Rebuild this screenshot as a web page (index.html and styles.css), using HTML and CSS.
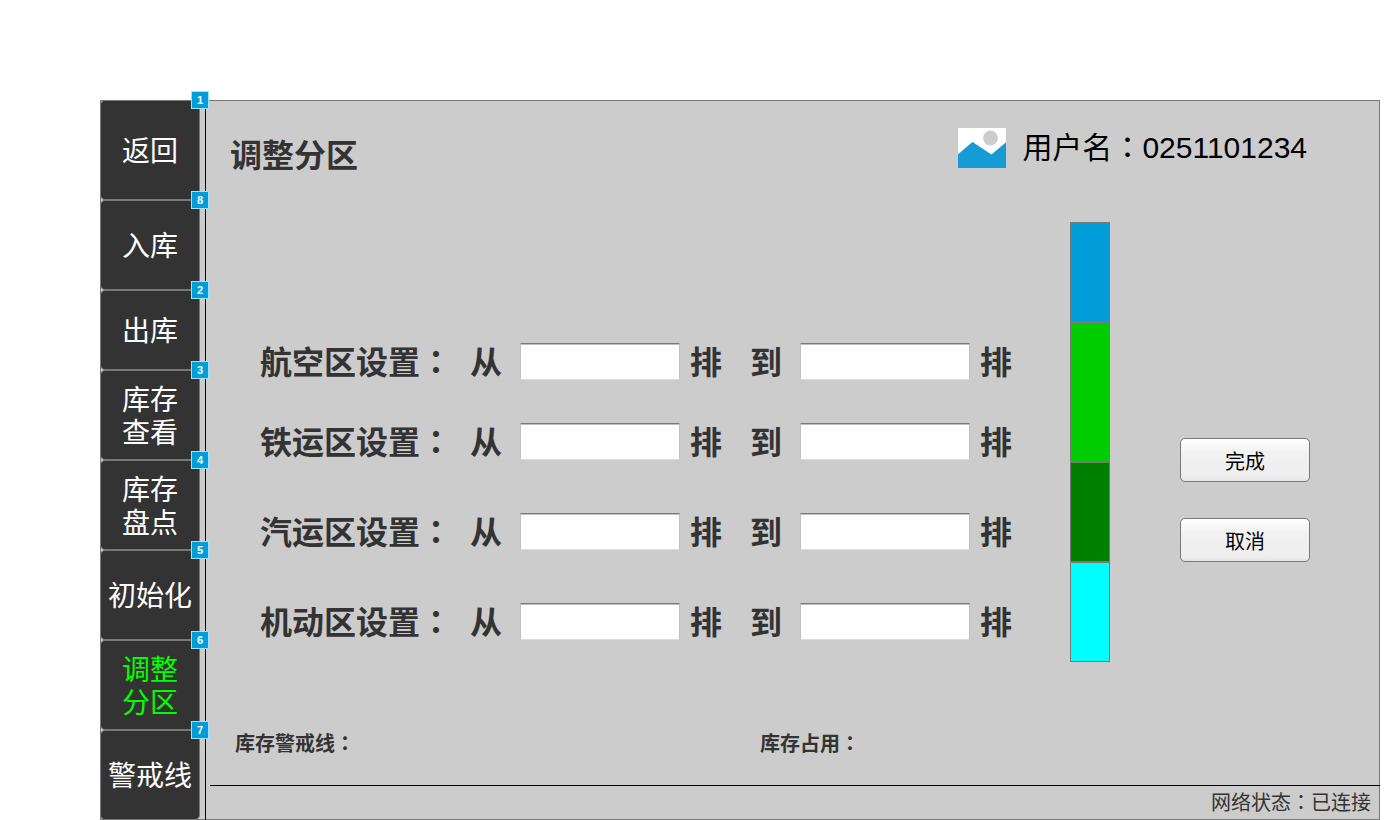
FILE: index.html
```html
<!DOCTYPE html>
<html lang="zh-CN">
<head>
<meta charset="utf-8">
<title>调整分区</title>
<link rel="stylesheet" href="styles.css">
</head>
<body>
<div class="frame">
  <nav class="sidebar">
    <button class="nav-item nav-tall" type="button">返回<span class="badge">1</span></button>
    <button class="nav-item" type="button">入库<span class="badge">8</span></button>
    <button class="nav-item nav-short" type="button">出库<span class="badge">2</span></button>
    <button class="nav-item" type="button">库存<br>查看<span class="badge">3</span></button>
    <button class="nav-item" type="button">库存<br>盘点<span class="badge">4</span></button>
    <button class="nav-item" type="button">初始化<span class="badge">5</span></button>
    <button class="nav-item active" type="button">调整<br>分区<span class="badge">6</span></button>
    <button class="nav-item" type="button">警戒线<span class="badge">7</span></button>
  </nav>
  <main class="main">
    <header class="header">
      <h1 class="title">调整分区</h1>
      <div class="user">
        <svg class="avatar" viewBox="0 0 48 40" aria-hidden="true">
          <rect width="48" height="40" fill="#fff"/>
          <circle cx="32.5" cy="10" r="7.4" fill="#ccc"/>
          <path d="M0 26.2 14.5 14 33.5 26.5 48 14.3V40H0z" fill="#169bd5"/>
        </svg>
        <span>用户名<span class="colon" lang="zh-TW">：</span>0251101234</span>
      </div>
    </header>
    <div class="body">
      <form class="zones" id="zones">
        <div class="zone">
          <span class="zone-name">航空区设置<span class="colon" lang="zh-TW">：</span></span>
          <label class="word" for="air-from">从</label><input class="field" id="air-from" type="text">
          <span class="unit">排</span>
          <label class="word" for="air-to">到</label><input class="field field-wide" id="air-to" type="text">
          <span class="unit unit-last">排</span>
        </div>
        <div class="zone">
          <span class="zone-name">铁运区设置<span class="colon" lang="zh-TW">：</span></span>
          <label class="word" for="rail-from">从</label><input class="field" id="rail-from" type="text">
          <span class="unit">排</span>
          <label class="word" for="rail-to">到</label><input class="field field-wide" id="rail-to" type="text">
          <span class="unit unit-last">排</span>
        </div>
        <div class="zone zone-spaced">
          <span class="zone-name">汽运区设置<span class="colon" lang="zh-TW">：</span></span>
          <label class="word" for="road-from">从</label><input class="field" id="road-from" type="text">
          <span class="unit">排</span>
          <label class="word" for="road-to">到</label><input class="field field-wide" id="road-to" type="text">
          <span class="unit unit-last">排</span>
        </div>
        <div class="zone zone-spaced">
          <span class="zone-name">机动区设置<span class="colon" lang="zh-TW">：</span></span>
          <label class="word" for="flex-from">从</label><input class="field" id="flex-from" type="text">
          <span class="unit">排</span>
          <label class="word" for="flex-to">到</label><input class="field field-wide" id="flex-to" type="text">
          <span class="unit unit-last">排</span>
        </div>
      </form>
      <div class="bar">
        <div class="segment air"></div>
        <div class="segment rail"></div>
        <div class="segment road"></div>
        <div class="segment reserve"></div>
      </div>
      <div class="actions">
        <button class="action" type="submit" form="zones">完成</button>
        <button class="action" type="button">取消</button>
      </div>
    </div>
    <div class="summary">
      <span>库存警戒线<span class="colon" lang="zh-TW">：</span></span>
      <span>库存占用<span class="colon" lang="zh-TW">：</span></span>
    </div>
    <footer class="status">网络状态<span class="colon" lang="zh-TW">：</span>已连接</footer>
  </main>
</div>
</body>
</html>
```
FILE: styles.css
```css
* {
  box-sizing: border-box;
}

body {
  margin: 0;
  padding: 100px 20px 0 100px;
  background: #fff;
  color: #333;
  font-family: "Liberation Sans", "Noto Sans CJK SC", sans-serif;
}

button,
input {
  font-family: inherit;
}

.colon {
  font-family: "Liberation Sans", "Noto Sans CJK TC", sans-serif;
}

.frame {
  display: flex;
  min-height: 720px;
  background: #ccc;
  box-shadow: inset 0 0 0 1px #797979;
}

.sidebar {
  display: flex;
  flex-direction: column;
  flex: none;
  width: 106px;
  padding-right: 5px;
  border-right: 1px solid #000;
}

.nav-item {
  position: relative;
  height: 90px;
  padding: 3px 0 0;
  border: 1px solid #797979;
  border-radius: 5px;
  background: #333;
  color: #fff;
  font-size: 28px;
  line-height: 33px;
}

.nav-tall {
  height: 100px;
}

.nav-short {
  height: 80px;
}

.active {
  color: #0f0;
}

.badge {
  position: absolute;
  top: -10px;
  right: -10px;
  z-index: 1;
  width: 18px;
  height: 18px;
  border: 1px solid #a6e1f8;
  background: #009dd9;
  color: #fff;
  font-size: 11px;
  font-weight: bold;
  line-height: 16px;
  text-align: center;
}

.main {
  display: flex;
  flex: 1;
  flex-direction: column;
  padding-left: 4px;
}

.header {
  display: flex;
  align-items: flex-start;
  justify-content: space-between;
  padding: 28px 73px 0 20px;
}

.title {
  margin: 8px 0 0;
  font-size: 32px;
  line-height: 40px;
}

.user {
  display: flex;
  align-items: center;
  gap: 16px;
  color: #000;
  font-size: 30px;
  line-height: 40px;
}

.avatar {
  width: 48px;
  height: 40px;
}

.body {
  display: flex;
  align-items: flex-end;
  margin-top: 46px;
  padding: 0 70px 0 50px;
}

.zones {
  margin-bottom: 18px;
  font-size: 32px;
  font-weight: bold;
  line-height: 41px;
}

.zone {
  display: flex;
}

.zone + .zone {
  margin-top: 39px;
}

.zone + .zone-spaced {
  margin-top: 49px;
}

.zone-name {
  width: 210px;
}

.word {
  width: 50px;
}

.field {
  width: 160px;
  height: 37px;
  padding: 0 4px;
  border: 1px solid #c0c0c0;
  border-top-color: #797979;
  border-bottom-color: #dcdcdc;
  background: #fff;
  box-shadow: inset 0 1px #c0c0c0;
  font-size: 20px;
}

.field-wide {
  width: 170px;
}

.unit {
  width: 70px;
  padding-left: 10px;
}

.unit-last {
  width: 42px;
}

.bar {
  width: 40px;
  margin-left: auto;
}

.segment {
  height: 100px;
  border: 1px solid #797979;
}

.air {
  background: #009dd9;
}

.rail {
  height: 140px;
  background: #0c0;
}

.road {
  background: #008000;
}

.reserve {
  background: #0ff;
}

.actions {
  display: flex;
  flex-direction: column;
  gap: 36px;
  margin: 0 0 100px 70px;
}

.action {
  width: 130px;
  height: 44px;
  padding: 0;
  border: 1px solid #797979;
  border-radius: 5px;
  background: linear-gradient(#fff, #f2f2f2 30%, #eee 90%, #e4e4e4);
  color: #000;
  font-size: 20px;
}

.summary {
  display: grid;
  grid-template-columns: 525fr 620fr;
  margin-top: auto;
  padding: 0 0 26px 25px;
  font-size: 20px;
  font-weight: bold;
  line-height: 30px;
}

.status {
  padding: 0 9px 0 0;
  border-top: 1px solid #000;
  font-size: 20px;
  line-height: 34px;
  text-align: right;
}
```
